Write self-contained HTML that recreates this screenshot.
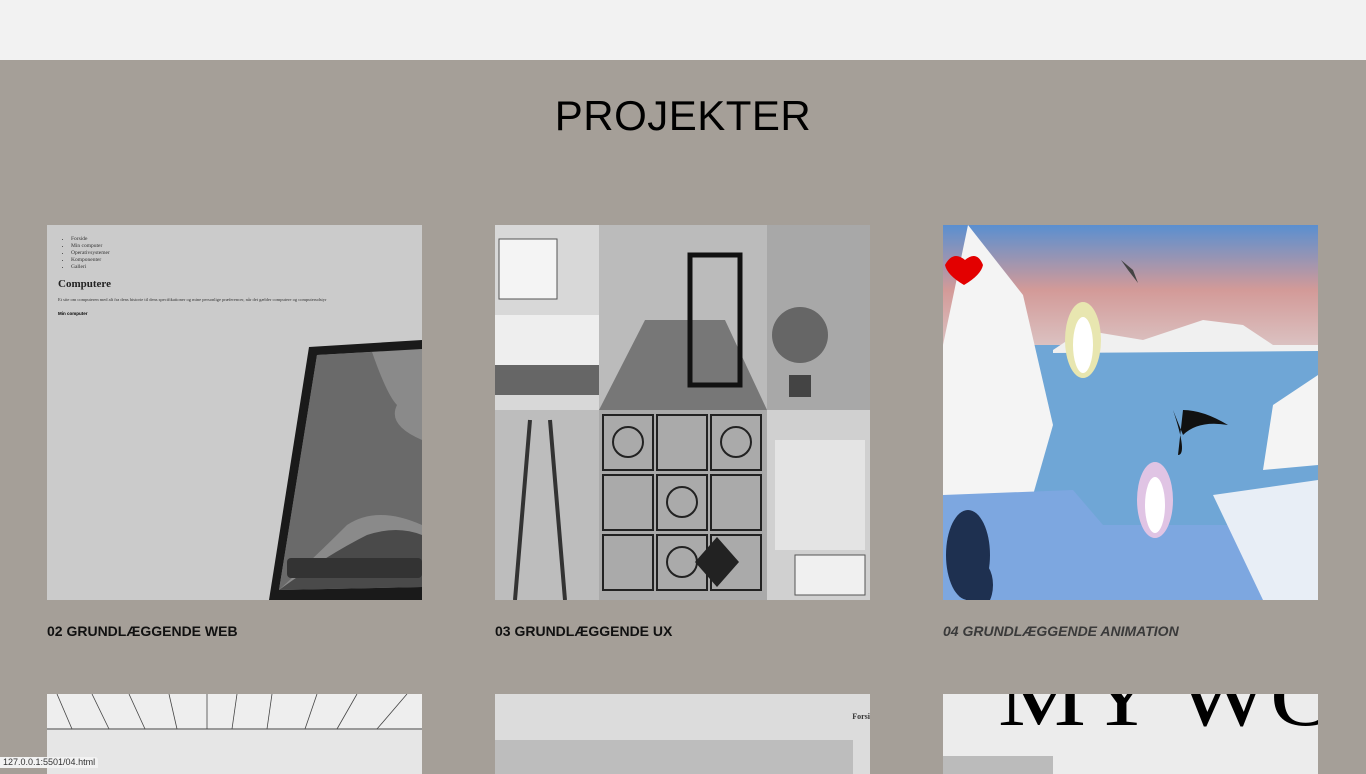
<!DOCTYPE html>
<html><head><meta charset="utf-8"><style>
*{margin:0;padding:0;box-sizing:border-box}
body{width:1366px;height:768px;overflow:hidden;background:#a59f98;font-family:"Liberation Sans",sans-serif;position:relative}
.top{position:absolute;left:0;top:0;width:1366px;height:60px;background:#f2f2f2}
h1{position:absolute;top:92px;left:0;width:1366px;text-align:center;font-weight:400;font-size:42px;color:#000;letter-spacing:0.5px}
.card{position:absolute;top:225px;width:375px;height:375px;overflow:hidden}
.lbl{position:absolute;top:623px;font-size:14px;font-weight:700;color:#111}
.c2{position:absolute;top:694px;width:375px;height:80px;overflow:hidden}
</style></head><body>
<div class="top"></div>
<h1>PROJEKTER</h1>

<div class="card" style="left:47px;background:#cbcbcb">
 <ul style="position:absolute;left:24px;top:11px;font-family:'Liberation Serif',serif;font-size:5.5px;line-height:7px;color:#333;list-style:disc">
  <li>Forside</li><li>Min computer</li><li>Operativsystemer</li><li>Komponenter</li><li>Galleri</li></ul>
 <div style="position:absolute;left:11px;top:53px;font-family:'Liberation Serif',serif;font-weight:700;font-size:11px;color:#222">Computere</div>
 <div style="position:absolute;left:11px;top:72px;font-family:'Liberation Serif',serif;font-size:4.5px;color:#333;white-space:nowrap">Et site om computeren med alt fra dens historie til dens specifikationer og mine personlige præferencer, når det gælder computere og computerudstyr</div>
 <div style="position:absolute;left:11px;top:86px;font-size:4.5px;font-weight:700;color:#000">Min computer</div>
 <svg width="375" height="375" style="position:absolute;left:0;top:0">
  <path d="M262 122 L375 115 L375 375 L222 375 Z" fill="#1a1a1a"/>
  <path d="M270 130 L375 124 L375 362 L232 365 Z" fill="#8a8a8a"/>
  <path d="M270 130 L325 127 Q340 170 350 180 Q340 200 375 215 L375 300 Q330 280 300 300 Q270 330 232 365 Z" fill="#6a6a6a"/>
  <path d="M232 365 Q280 330 320 310 Q350 300 375 310 L375 362 Z" fill="#4a4a4a"/>
  <rect x="240" y="333" width="135" height="20" rx="4" fill="#333"/>
 </svg>
</div>
<div class="lbl" style="left:47px">02 GRUNDLÆGGENDE WEB</div>

<div class="card" style="left:495px;background:#888">
 <svg width="375" height="375" style="position:absolute;left:0;top:0">
  <rect x="0" y="0" width="104" height="185" fill="#d8d8d8"/>
  <rect x="4" y="14" width="58" height="60" fill="#f4f4f4" stroke="#555"/>
  <rect x="0" y="90" width="104" height="50" fill="#eee"/>
  <rect x="0" y="140" width="104" height="30" fill="#666"/>
  <rect x="104" y="0" width="168" height="185" fill="#bbb"/>
  <path d="M104 185 L150 95 L230 95 L272 185 Z" fill="#777"/>
  <rect x="195" y="30" width="50" height="130" fill="none" stroke="#111" stroke-width="5"/>
  <rect x="272" y="0" width="103" height="185" fill="#a8a8a8"/>
  <rect x="294" y="150" width="22" height="22" fill="#444"/>
  <circle cx="305" cy="110" r="28" fill="#666"/>
  <rect x="0" y="185" width="104" height="190" fill="#bdbdbd"/>
  <path d="M35 195 L20 375 M55 195 L70 375" stroke="#333" stroke-width="4"/>
  <rect x="104" y="185" width="168" height="190" fill="#aaa"/>
  <g fill="none" stroke="#222" stroke-width="2">
   <rect x="108" y="190" width="50" height="55"/><rect x="162" y="190" width="50" height="55"/><rect x="216" y="190" width="50" height="55"/>
   <rect x="108" y="250" width="50" height="55"/><rect x="162" y="250" width="50" height="55"/><rect x="216" y="250" width="50" height="55"/>
   <rect x="108" y="310" width="50" height="55"/><rect x="162" y="310" width="50" height="55"/><rect x="216" y="310" width="50" height="55"/>
   <circle cx="133" cy="217" r="15"/><circle cx="241" cy="217" r="15"/><circle cx="187" cy="277" r="15"/><circle cx="187" cy="337" r="15"/>
  </g>
  <path d="M222 312 L244 337 L222 362 L200 337Z" fill="#222"/>
  <rect x="272" y="185" width="103" height="190" fill="#d0d0d0"/>
  <rect x="280" y="215" width="90" height="110" fill="#e4e4e4"/>
  <rect x="300" y="330" width="70" height="40" fill="#f0f0f0" stroke="#555"/>
 </svg>
</div>
<div class="lbl" style="left:495px">03 GRUNDLÆGGENDE UX</div>

<div class="card" style="left:943px">
 <svg width="375" height="375" style="position:absolute;left:0;top:0">
  <defs><linearGradient id="sky" x1="0" y1="0" x2="0" y2="1"><stop offset="0" stop-color="#5a8fd0"/><stop offset="0.5" stop-color="#d39a98"/><stop offset="1" stop-color="#dcc8c8"/></linearGradient></defs>
  <rect width="375" height="130" fill="url(#sky)"/>
  <rect y="120" width="375" height="255" fill="#6fa6d6"/>
  <path d="M110 125 L140 105 L200 115 L260 95 L300 100 L330 120 L375 120 L375 126 L110 128 Z" fill="#f0f0f0"/>
  <path d="M0 120 L25 0 L80 70 L110 200 L90 270 L0 270 Z" fill="#f4f4f4"/>
  <path d="M0 270 L130 265 L160 300 L375 300 L375 375 L0 375 Z" fill="#7da7e0"/>
  <path d="M330 180 L375 150 L375 240 L320 245 Z" fill="#f4f4f4"/>
  <path d="M270 270 L375 255 L375 375 L320 375 Z" fill="#e8eef6"/>
  <path d="M2 40 Q10 25 22 35 Q34 25 40 40 Q38 50 21 60 Q4 50 2 40Z" fill="#e30000"/>
  <ellipse cx="140" cy="115" rx="18" ry="38" fill="#e8e6b0"/><ellipse cx="140" cy="120" rx="10" ry="28" fill="#fff"/>
  <path d="M230 185 Q245 230 235 230 L240 185 Q260 185 285 200 Q255 195 240 210Z" fill="#111"/>
  <ellipse cx="212" cy="275" rx="18" ry="38" fill="#e0c4e4"/><ellipse cx="212" cy="280" rx="10" ry="28" fill="#fff"/>
  <ellipse cx="25" cy="330" rx="22" ry="45" fill="#1e3050"/><ellipse cx="35" cy="360" rx="15" ry="25" fill="#1e3050"/>
  <path d="M178 35 L190 45 L195 58 L185 45Z" fill="#444"/>
 </svg>
</div>
<div class="lbl" style="left:943px;font-style:italic;color:#3a3a3a">04 GRUNDLÆGGENDE ANIMATION</div>

<div class="c2" style="left:47px;background:#e6e6e6">
 <svg width="375" height="80" style="position:absolute;left:0;top:0"><rect width="375" height="35" fill="#eee"/><line x1="0" y1="35" x2="375" y2="35" stroke="#999" stroke-width="2"/>
 <g stroke="#444" stroke-width="0.8"><line x1="10" y1="0" x2="25" y2="35"/><line x1="45" y1="0" x2="62" y2="35"/><line x1="82" y1="0" x2="98" y2="35"/><line x1="122" y1="0" x2="130" y2="35"/><line x1="160" y1="0" x2="160" y2="35"/><line x1="190" y1="0" x2="185" y2="35"/><line x1="225" y1="0" x2="220" y2="35"/><line x1="270" y1="0" x2="258" y2="35"/><line x1="310" y1="0" x2="290" y2="35"/><line x1="360" y1="0" x2="330" y2="35"/></g></svg>
</div>
<div class="c2" style="left:495px;background:#dcdcdc">
 <div style="position:absolute;right:0;top:18px;font-family:'Liberation Serif',serif;font-size:8px;font-weight:700;color:#333">Forsi</div>
 <div style="position:absolute;left:0;top:46px;width:358px;height:40px;background:#bdbdbd"></div>
</div>
<div class="c2" style="left:943px;background:#ececec">
 <div style="position:absolute;left:55px;top:-48px;font-family:'Liberation Serif',serif;font-size:86px;color:#000;white-space:nowrap;transform:scaleX(1.15);transform-origin:left">MY WO</div>
 <div style="position:absolute;left:0;top:62px;width:110px;height:20px;background:#bbb"></div>
</div>

<div style="position:absolute;left:0;top:757px;height:11px;padding:0 3px;background:#f2f2f2;font-size:9px;line-height:11px;color:#333;border-top-right-radius:3px">127.0.0.1:5501/04.html</div>
</body></html>
